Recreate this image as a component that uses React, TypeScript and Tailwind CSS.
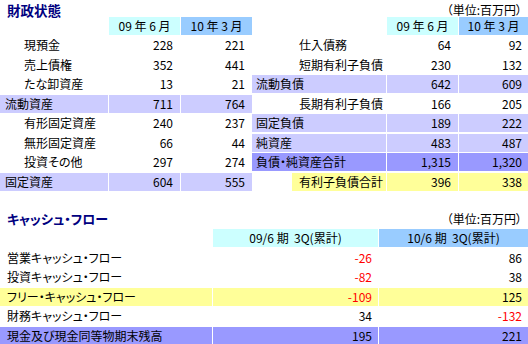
import React from "react";

type Num = { v: string; red?: boolean };

const topLeft: { label: string; a: string; b: string; band?: boolean }[] = [
  { label: "現預金", a: "228", b: "221" },
  { label: "売上債権", a: "352", b: "441" },
  { label: "たな卸資産", a: "13", b: "21" },
  { label: "流動資産", a: "711", b: "764", band: true },
  { label: "有形固定資産", a: "240", b: "237" },
  { label: "無形固定資産", a: "66", b: "44" },
  { label: "投資その他", a: "297", b: "274" },
  { label: "固定資産", a: "604", b: "555", band: true },
];

const topRight: { label: string; a: string; b: string; kind: "plain" | "band" | "dark" | "yellow" }[] = [
  { label: "仕入債務", a: "64", b: "92", kind: "plain" },
  { label: "短期有利子負債", a: "230", b: "132", kind: "plain" },
  { label: "流動負債", a: "642", b: "609", kind: "band" },
  { label: "長期有利子負債", a: "166", b: "205", kind: "plain" },
  { label: "固定負債", a: "189", b: "222", kind: "band" },
  { label: "純資産", a: "483", b: "487", kind: "band" },
  { label: "負債・純資産合計", a: "1,315", b: "1,320", kind: "dark" },
  { label: "有利子負債合計", a: "396", b: "338", kind: "yellow" },
];

const cashRows: { label: string; a: Num; b: Num; bg: string }[] = [
  { label: "営業キャッシュ・フロー", a: { v: "-26", red: true }, b: { v: "86" }, bg: "" },
  { label: "投資キャッシュ・フロー", a: { v: "-82", red: true }, b: { v: "38" }, bg: "" },
  { label: "フリー・キャッシュ・フロー", a: { v: "-109", red: true }, b: { v: "125" }, bg: "bg-[#ffff99]" },
  { label: "財務キャッシュ・フロー", a: { v: "34" }, b: { v: "-132", red: true }, bg: "" },
  { label: "現金及び現金同等物期末残高", a: { v: "195" }, b: { v: "221" }, bg: "bg-[#9999ff]" },
];

const App = () => {
  return (
    <div className="w-[528px] h-[344px] overflow-hidden bg-white text-black text-[12px] leading-none font-['Noto_Sans_CJK_JP',sans-serif] [font-feature-settings:'palt']">
      {/* 財政状態 */}
      <div className="flex justify-between items-start h-[16.5px]">
        <span className="pl-[7px] text-[13.5px] leading-normal font-bold text-[#000080] -mb-[4px]">財政状態</span>
        <span className="pr-[6px] pt-[3px] leading-[13px]">（単位:百万円）</span>
      </div>

      <div className="flex">
        {/* Left table */}
        <div className="w-[252px] flex flex-col gap-[1.5px]">
          <div className="flex h-[18px] gap-[1px]">
            <div className="w-[108px]" />
            <div className="w-[71px] bg-[#ccffff] flex items-center justify-center">09 年 6 月</div>
            <div className="w-[71px] bg-[#99ccff] flex items-center justify-center">10 年 3 月</div>
          </div>
          {topLeft.map((r) => (
            <div key={r.label} className="flex h-[18px] gap-[1px]">
              <div className={`w-[108px] flex items-center ${r.band ? "bg-[#ccccff] pl-[5px]" : "pl-[24px]"}`}>{r.label}</div>
              <div className={`w-[71px] flex items-center justify-end pr-[7px] ${r.band ? "bg-[#ccccff]" : ""}`}>{r.a}</div>
              <div className={`w-[71px] flex items-center justify-end pr-[7px] ${r.band ? "bg-[#ccccff]" : ""}`}>{r.b}</div>
            </div>
          ))}
        </div>

        {/* Right table */}
        <div className="flex-1 flex flex-col gap-[1.5px]">
          <div className="flex h-[18px] gap-[1px]">
            <div className="w-[134px]" />
            <div className="w-[71px] bg-[#ccffff] flex items-center justify-center">09 年 6 月</div>
            <div className="flex-1 bg-[#99ccff] flex items-center justify-center">10 年 3 月</div>
          </div>
          {topRight.map((r) => {
            const bg =
              r.kind === "band" ? "bg-[#ccccff]" : r.kind === "dark" ? "bg-[#9999ff]" : r.kind === "yellow" ? "bg-[#ffff99]" : "";
            return (
              <div key={r.label} className="flex h-[18px] gap-[1px]">
                {r.kind === "yellow" ? (
                  <div className="w-[134px] flex">
                    <div className="w-[40px]" />
                    <div className={`flex-1 flex items-center pl-[7px] ${bg}`}>{r.label}</div>
                  </div>
                ) : (
                  <div className={`w-[134px] flex items-center ${r.kind === "plain" ? "pl-[47px]" : "pl-[4px]"} ${bg}`}>{r.label}</div>
                )}
                <div className={`w-[71px] flex items-center justify-end pr-[7px] ${bg}`}>{r.a}</div>
                <div className={`flex-1 flex items-center justify-end pr-[6px] ${bg}`}>{r.b}</div>
              </div>
            );
          })}
        </div>
      </div>

      {/* キャッシュ・フロー */}
      <div className="flex justify-between items-center h-[38.5px] pt-[18px]">
        <span className="pl-[7px] text-[13px] leading-[15px] font-bold text-[#000080]">キャッシュ・フロー</span>
        <span className="pr-[6px] leading-[13px]">（単位:百万円）</span>
      </div>

      <div className="flex flex-col gap-[1.5px]">
        <div className="flex h-[18px] gap-[1px]">
          <div className="w-[212px]" />
          <div className="w-[165px] bg-[#ccffff] flex items-center justify-center">09/6 期&nbsp;&nbsp;3Q(累計)</div>
          <div className="flex-1 bg-[#99ccff] flex items-center justify-center">10/6 期&nbsp;&nbsp;3Q(累計)</div>
        </div>
        {cashRows.map((r) => (
          <div key={r.label} className="flex h-[18px] gap-[1px]">
            <div className={`w-[212px] flex items-center pl-[7px] ${r.bg}`}>{r.label}</div>
            <div className={`w-[165px] flex items-center justify-end pr-[6px] ${r.bg} ${r.a.red ? "text-[#ff0000]" : ""}`}>{r.a.v}</div>
            <div className={`flex-1 flex items-center justify-end pr-[6px] ${r.bg} ${r.b.red ? "text-[#ff0000]" : ""}`}>{r.b.v}</div>
          </div>
        ))}
      </div>
    </div>
  );
};

export default App;
